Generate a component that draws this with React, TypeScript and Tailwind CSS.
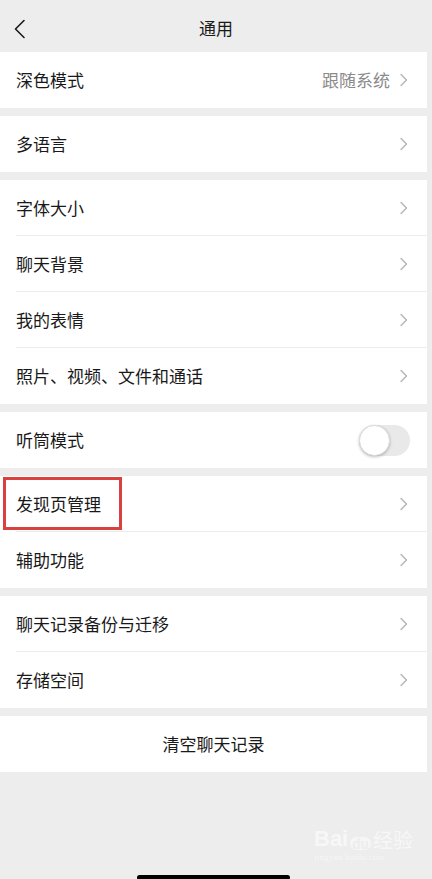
import React from "react";

const font = { fontFamily: '"Noto Sans CJK SC", "Noto Sans", sans-serif' };

function Chevron() {
    return (
        <svg width="8" height="14" viewBox="0 0 8 14" className="shrink-0">
            <path d="M1 1.5 L6.5 7 L1 12.5" fill="none" stroke="#b4b4b4" strokeWidth="1.4" strokeLinecap="round" strokeLinejoin="round" />
        </svg>
    );
}

function Row({ label, value, last, toggle }: { label: string; value?: string; last?: boolean; toggle?: boolean }) {
    return (
        <div className="relative h-[56px] flex items-center pl-4 pr-[19px]">
            <span className="flex-1 text-[17px] text-[#191919] -mt-px">{label}</span>
            {value && <span className="text-[17px] text-[#8a8a8a] mr-[10px] -mt-px">{value}</span>}
            {toggle ? (
                <div className="w-[51px] h-[31px] rounded-full bg-[#e9e9e9] relative -mr-[2px]">
                    <div className="absolute left-0 top-0 w-[31px] h-[31px] rounded-full bg-white shadow-[0_1px_3px_rgba(0,0,0,0.25)] border border-[#dcdcdc]" />
                </div>
            ) : (
                <Chevron />
            )}
            {!last && <div className="absolute left-4 right-0 bottom-0 h-px bg-[#ececec]" />}
        </div>
    );
}

function Card({ children }: { children: React.ReactNode }) {
    return <div className="bg-white mr-[5px]">{children}</div>;
}

export default function App() {
    return (
        <div className="relative w-[432px] h-[879px] bg-[#ededed] overflow-hidden" style={font}>
            {/* Header */}
            <div className="h-[52px] relative flex items-center justify-center">
                <svg width="14" height="20" viewBox="0 0 14 20" className="absolute left-[13px] top-[19px]">
                    <path d="M11 1.5 L2.5 10 L11 18.5" fill="none" stroke="#1a1a1a" strokeWidth="1.6" strokeLinecap="round" strokeLinejoin="round" />
                </svg>
                <span className="text-[17px] text-[#191919] mt-[4px]">通用</span>
            </div>

            <div className="flex flex-col gap-[8px]">
                <Card>
                    <Row label="深色模式" value="跟随系统" last />
                </Card>
                <Card>
                    <Row label="多语言" last />
                </Card>
                <Card>
                    <Row label="字体大小" />
                    <Row label="聊天背景" />
                    <Row label="我的表情" />
                    <Row label="照片、视频、文件和通话" last />
                </Card>
                <Card>
                    <Row label="听筒模式" toggle last />
                </Card>
                <Card>
                    <Row label="发现页管理" />
                    <Row label="辅助功能" last />
                </Card>
                <Card>
                    <Row label="聊天记录备份与迁移" />
                    <Row label="存储空间" last />
                </Card>
                <Card>
                    <div className="h-[56px] flex items-center justify-center text-[17px] text-[#191919] pb-[1px]">清空聊天记录</div>
                </Card>
            </div>

            {/* Annotation box */}
            <div className="absolute left-[3px] top-[477px] w-[119px] h-[53px] border-[3px] border-[#d8413e]" />

            {/* Watermark */}
            <div className="absolute left-[314px] top-[828px] text-white/60 leading-none">
                <div className="flex items-end gap-[2px]">
                    <span className="text-[22px] font-bold" style={{ fontFamily: '"Liberation Sans", sans-serif' }}>Bai</span>
                    <span className="text-[13px] font-bold bg-white/50 text-[#ededed] rounded-full px-[2px]">du</span>
                    <span className="text-[20px]">经验</span>
                </div>
                <div className="text-[9px] text-white/50 mt-[3px] tracking-wide" style={{ fontFamily: '"Liberation Serif", serif' }}>jingyan.baidu.com</div>
            </div>

            {/* Home indicator */}
            <div className="absolute left-[137px] top-[875px] w-[153px] h-[5px] rounded-full bg-black" />
        </div>
    );
}
